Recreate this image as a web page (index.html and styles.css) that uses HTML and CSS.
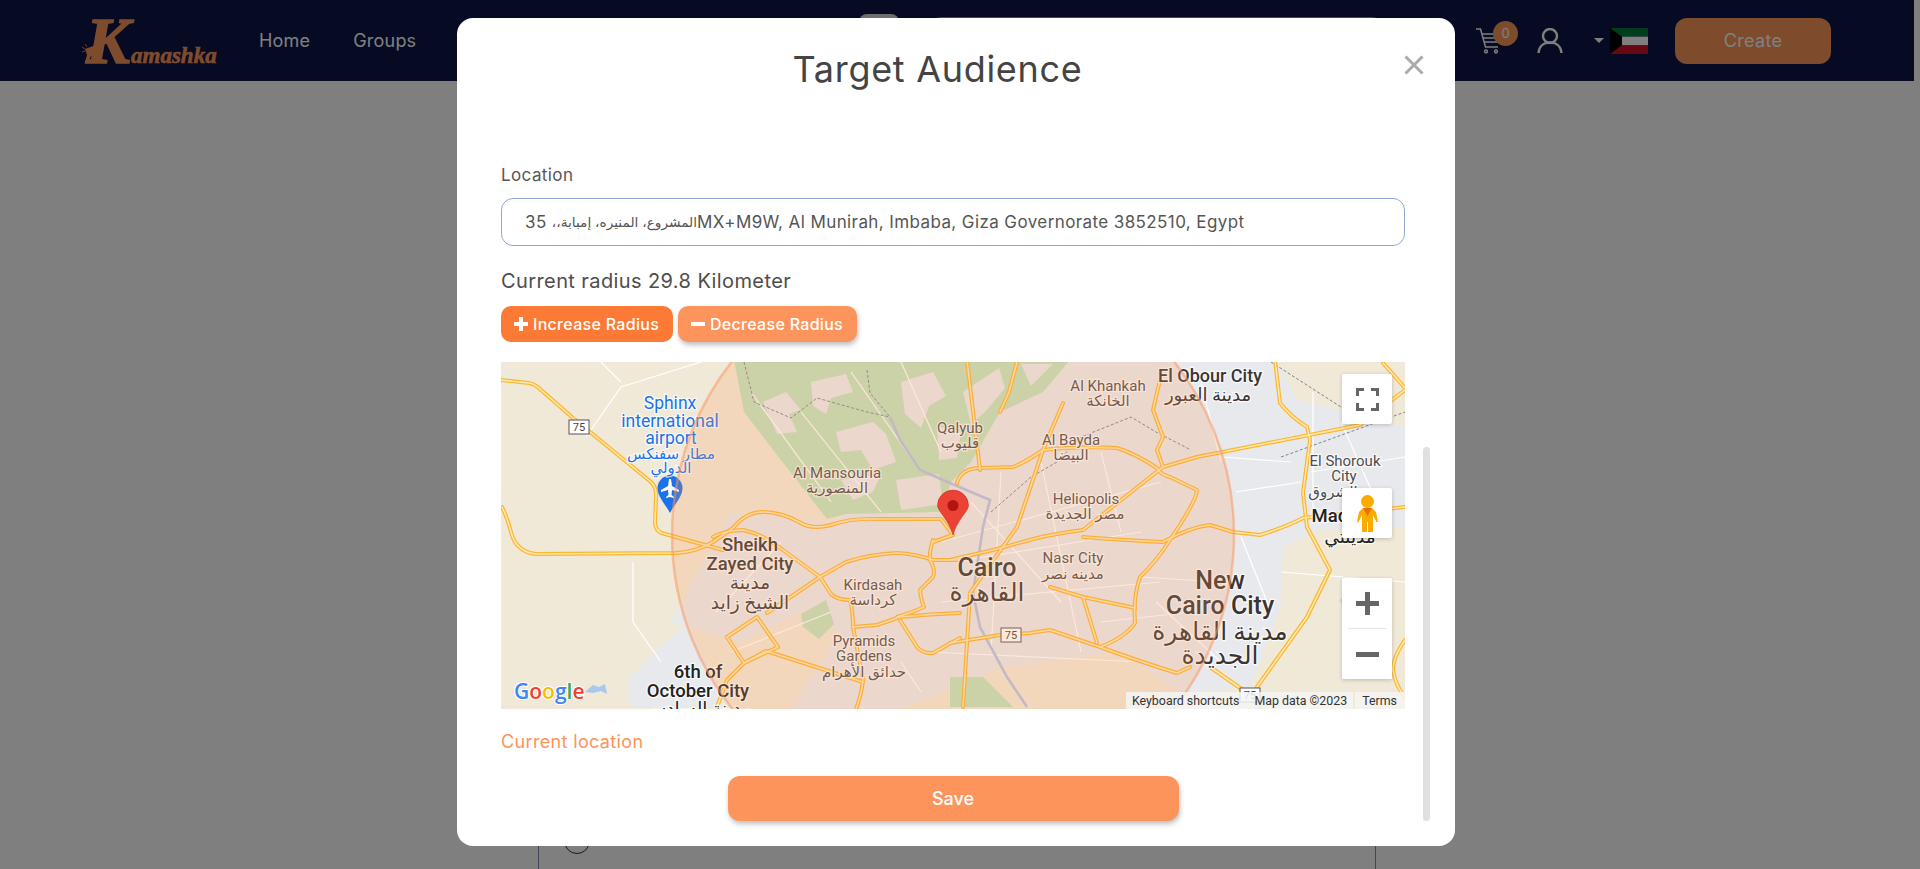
FILE: index.html
```html
<!DOCTYPE html>
<html lang="en">
  <head>
    <meta charset="UTF-8" />
    <meta name="viewport" content="width=device-width, initial-scale=1.0" />
    <title>Target Audience</title>
    <link rel="stylesheet" href="styles.css">
  </head>
  <body>
    <nav class="navbar">
      <a href="#" class="logo">
        <svg class="logo-horn" width="18" height="24" viewBox="0 0 18 24">
          <path d="M3 8 L14 4 L13 16 L9 15 L6 22 L3 21 L5 14 Z" />
          <path class="logo-horn-rays" d="M0 6 L3 8 M0 11 L3 10 M3 3 L5 6" />
        </svg>
        <span class="logo-k">K</span><span class="logo-rest">amashka</span>
      </a>
      <a href="#" class="nav-link nav-home">Home</a>
      <a href="#" class="nav-link nav-groups">Groups</a>
      <span class="nav-pill"></span>
      <span class="nav-search"></span>
      <div class="nav-right">
        <div class="cart">
          <svg width="26" height="27" viewBox="0 0 26 27" fill="none">
            <path d="M1 2 H5.5 L10.5 20 H23" />
            <path d="M7 7 H24 L22 15 H9" />
            <path d="M8 11 H23" />
            <circle cx="11" cy="24.5" r="1.4" />
            <circle cx="21" cy="24.5" r="1.4" />
          </svg>
          <span class="cart-badge">0</span>
        </div>
        <svg class="user-icon" width="26" height="26" viewBox="0 0 26 26" fill="none">
          <circle cx="13" cy="8" r="7" />
          <path d="M1.5 25 C2 18 7 14.5 13 14.5 C19 14.5 24 18 24.5 25" />
        </svg>
        <span class="caret"></span>
        <svg class="flag" width="38" height="26" viewBox="0 0 38 26">
          <rect width="38" height="8.67" fill="#007a3d" />
          <rect y="8.67" width="38" height="8.67" fill="#fff" />
          <rect y="17.33" width="38" height="8.67" fill="#ce1126" />
          <path d="M0 0 L12 8.67 V17.33 L0 26 Z" fill="#000" />
        </svg>
        <button class="btn-create">Create</button>
      </div>
    </nav>

    <main class="page-card">
      <span class="radio-dot"></span>
    </main>

    <!-- Target audience popup -->
    <div class="overlay">
      <div class="modal">
        <button class="modal-close" aria-label="Close">
          <svg width="20" height="20" viewBox="0 0 20 20">
            <path d="M1.5 1.5 L18.5 18.5 M18.5 1.5 L1.5 18.5" />
          </svg>
        </button>
        <span class="modal-scrollbar"></span>

        <h2 class="modal-title">Target Audience</h2>

        <div class="field-label">Location</div>
        <div class="field-input"><span>35 </span><span class="field-arabic" dir="rtl">المشروع، المنيره، إمبابة،،</span><span>MX+M9W, Al Munirah, Imbaba, Giza Governorate 3852510, Egypt</span></div>

        <p class="radius-text">Current radius 29.8 Kilometer</p>
        <div class="radius-buttons">
          <button class="btn-radius btn-increase">
            <svg width="14" height="14" viewBox="0 0 14 14"><path d="M5 0 H9 V5 H14 V9 H9 V14 H5 V9 H0 V5 H5 Z" /></svg>
            Increase Radius
          </button>
          <button class="btn-radius btn-decrease">
            <svg width="14" height="14" viewBox="0 0 14 14"><path d="M0 5 H14 V9 H0 Z" /></svg>
            Decrease Radius
          </button>
        </div>

        <div class="map">
          <svg class="map-canvas" width="904" height="347" viewBox="0 0 904 347">
            <defs>
              <g id="highways">
                <path d="M-1 18 L28 21 Q34 22 40 28 L72 56 L150 120 Q156 126 155 135 L154 160 Q154 170 164 172 L222 188" />
                <path d="M1 145 Q6 155 10 170 Q15 190 35 192 L175 191 Q195 190 212 180 L232 166 Q245 150 262 150 Q280 150 298 160 Q310 168 330 163 Q350 156 375 157 L439 157" />
                <path d="M212 175 Q225 168 242 168 Q262 172 282 188 L319 215 L330 232 Q336 238 349 238 Q352 250 352 265 L362 318 Q360 335 355 347" />
                <path d="M266 251 L319 215 L345 200 Q370 192 396 191 Q415 192 432 198 L459 198" />
                <path d="M226 275 L256 255 L277 285 L243 301 L226 318 Q220 335 215 347" />
                <path d="M226 275 L243 301 L265 289 L362 320" />
                <path d="M352 265 L376 263 L399 255 Q430 252 459 251" />
                <path d="M432 178 Q428 190 429 198 Q435 208 432 215 L419 228 Q420 238 423 245 Q412 250 396 255" />
                <path d="M399 258 L416 285 Q422 292 432 291 L459 276" />
                <path d="M456 121 Q460 106 480 106 L512 105 Q525 100 542 88 Q575 84 616 86 Q635 92 656 106 Q660 113 669 115 L696 128 Q696 138 669 178 Q655 200 639 215 Q632 235 634 261 Q625 275 599 285 L549 268 L529 271 L499 273 L449 281" />
                <path d="M599 285 Q640 300 676 311 L689 305" />
                <path d="M709 305 L742 328 L760 345" />
                <path d="M449 198 L492 188 L540 175 Q565 170 582 168 L662 105 L696 95 L859 63 L904 28" />
                <path d="M582 175 Q620 178 662 180 Q690 165 709 163 L732 170 L759 173 Q785 165 802 156 L904 145" />
                <path d="M634 246 L582 235 L549 225" />
                <path d="M582 235 L596 281" />
                <path d="M466 -2 L479 108" />
                <path d="M562 41 L542 88 L516 165 L469 231 L466 281 L462 345" />
                <path d="M659 18 L652 48 L662 75 L656 88 L662 105" />
                <path d="M774 -2 L779 41 Q790 55 806 65 L809 78 L802 131 L806 165 L829 208 L806 255 L756 325" />
                <path d="M882 1 L904 26" />
                <path d="M904 278 Q892 295 892 308 Q895 325 904 335" />
                <path d="M516 0 L508 30 L499 50" />
                <path d="M440 157 L452 173 L432 180" />
              </g>
            </defs>

            <rect class="map-land" width="904" height="347" />
            <path class="map-urban" d="M440 60 L560 0 L776 -2 L796 38 L904 65 L904 165 L816 168 L782 185 L779 248 L749 325 L682 332 L620 290 L500 305 L400 347 L290 347 L340 270 L300 250 L240 280 L170 260 L230 150 L330 160 Z" />
            <path class="map-urban" d="M129 315 L159 285 L186 261 L226 345 L129 345 Z" />
            <path class="map-green" d="M233 -2 L243 50 L276 93 L326 157 L345 152 L440 150 L450 120 L470 100 L499 50 L542 30 L569 -2 Z" />
            <path class="map-blotch" d="M262 40 L285 30 L300 48 L288 52 L296 70 L276 72 Z M310 20 L345 12 L352 30 L330 36 L325 52 L312 44 Z M335 70 L372 60 L385 72 L395 100 L372 108 L360 88 L340 90 Z M400 20 L432 10 L445 34 L428 44 L420 66 L404 52 Z M340 118 L380 112 L372 130 L352 138 Z M395 118 L438 112 L442 142 L400 148 Z M462 30 L498 6 L504 26 L484 50 L470 62 Z M520 2 L552 2 L530 24 Z M436 64 L460 70 L456 96 L438 98 Z" />
            <path class="map-green" d="M300 252 L325 238 L333 262 L318 277 L302 265 Z M449 315 L482 315 L512 345 L449 345 Z M838 238 L850 232 L860 244 L846 248 Z" />

            <g class="map-streets">
              <path d="M200 0 L120 25 L85 75 M132 200 L132 260 L160 300 M215 250 L280 180 M120 20 L100 0 M250 30 L330 140 M300 50 L380 150 M350 10 L420 110" />
              <path d="M440 180 L660 120 M452 200 L640 170 M470 140 L560 240 M440 240 L660 220 M500 110 L490 290 M540 100 L580 290 M600 90 L620 170 M430 290 L640 300 M400 300 L420 330" />
              <path d="M600 260 L690 250 M640 215 L720 220 M655 240 L720 300 M700 20 L720 100 M720 95 L790 100 M735 130 L800 120 M740 175 L770 250" />
              <path d="M812 30 L812 160 M840 60 L880 150 M810 110 L904 95 M780 210 L904 220 M230 290 L330 250 M400 0 L440 90" />
            </g>
            <path class="map-nile" d="M389 55 L399 78 L419 108 L449 121 L489 138 L482 165 L472 231 L479 265 L506 315 L526 345" />
            <path class="map-border" d="M243 0 L253 40 L290 56 L316 36 L366 50 L389 55 M366 8 L369 31 L389 55 M490 150 L530 115 L556 100 L580 75 L630 55 L655 70 L690 88 M770 0 L840 45 M780 95 L904 50" />
            <use href="#highways" class="road-casing" />
            <use href="#highways" class="road-core" />

            <g class="shield"><rect x="68" y="58" width="20" height="14" /><text x="78" y="69">75</text></g>
            <g class="shield"><rect x="500" y="266" width="20" height="14" /><text x="510" y="277">75</text></g>
            <g class="shield"><rect x="739" y="326" width="20" height="14" /><text x="749" y="337">75</text></g>

            <path class="air-pin" d="M169 151 C165 143 156.500 135 156.500 126 A12.500 12.500 0 0 1 181.500 126 C181.500 135 173 143 169 151 Z" />
            <path class="air-plane" d="M168 117 H170 L171 124 L178 128 V130 L171 128 L170.500 133 L173 135 V136 L169 135 L165 136 V135 L167.500 133 L167 128 L160 130 V128 L167 124 Z" />

            <g class="lbl lbl-blue">
              <text class="t-air" x="169" y="47">Sphinx</text>
              <text class="t-air" x="169" y="65">international</text>
              <text class="t-air" x="170" y="82">airport</text>
              <text class="t-s" x="170" y="97">مطار سفنكس</text>
              <text class="t-s" x="170" y="111">الدولي</text>
            </g>
            <g class="lbl">
              <text class="t-s" x="336" y="116">Al Mansouria</text>
              <text class="t-s" x="336" y="131">المنصورية</text>
              <text class="t-s" x="372" y="228">Kirdasah</text>
              <text class="t-s" x="372" y="243">كرداسة</text>
              <text class="t-s" x="363" y="284">Pyramids</text>
              <text class="t-s" x="363" y="299">Gardens</text>
              <text class="t-s" x="363" y="315">حدائق الأهرام</text>
              <text class="t-s" x="459" y="71">Qalyub</text>
              <text class="t-s" x="459" y="86">قليوب</text>
              <text class="t-s" x="607" y="29">Al Khankah</text>
              <text class="t-s" x="607" y="44">الخانكة</text>
              <text class="t-s" x="570" y="83">Al Bayda</text>
              <text class="t-s" x="570" y="98">البيضا</text>
              <text class="t-s" x="585" y="142">Heliopolis</text>
              <text class="t-s" x="584" y="157">مصر الجديدة</text>
              <text class="t-s" x="572" y="201">Nasr City</text>
              <text class="t-s" x="572" y="217">مدينه نصر</text>
              <text class="t-s" x="844" y="104">El Shorouk</text>
              <text class="t-s" x="843" y="119">City</text>
              <text class="t-s" x="832" y="135">الشروق</text>
            </g>
            <g class="lbl lbl-big">
              <text class="t-m" x="249" y="189">Sheikh</text>
              <text class="t-m" x="249" y="208">Zayed City</text>
              <text class="t-m" x="249" y="227">مدينة</text>
              <text class="t-m" x="249" y="247">الشيخ زايد</text>
              <text class="t-m t-black" x="197" y="316">6th of</text>
              <text class="t-m t-black" x="197" y="335">October City</text>
              <text class="t-m t-black" x="197" y="353">مدينة السادس</text>
              <text class="t-o" x="709" y="20">El Obour City</text>
              <text class="t-o" x="707" y="39">مدينة العبور</text>
              <text class="t-l" x="486" y="214">Cairo</text>
              <text class="t-l" x="486" y="239">القاهرة</text>
              <text class="t-l" x="719" y="227">New</text>
              <text class="t-l" x="719" y="252">Cairo City</text>
              <text class="t-l" x="719" y="278">مدينة القاهرة</text>
              <text class="t-l" x="719" y="302">الجديدة</text>
              <text class="t-m t-black" x="849" y="160">Madinaty</text>
              <text class="t-m t-black" x="849" y="181">مدينتي</text>
            </g>

            <path class="map-lake" d="M84 330 L92 323 L98 325 L104 322 L106 332 L100 329 L92 331 Z" />
            <text class="google-mark" x="13" y="337"><tspan class="g-blue">G</tspan><tspan class="g-red">o</tspan><tspan class="g-yellow">o</tspan><tspan class="g-blue">g</tspan><tspan class="g-green">l</tspan><tspan class="g-red">e</tspan></text>

            <circle class="radius-circle" cx="452" cy="173" r="281" />

            <path class="pin" d="M452 173 C448 158 436.500 149 436.500 143.500 A15.500 15.500 0 0 1 467.500 143.500 C467.500 149 456 158 452 173 Z" />
            <circle class="pin-dot" cx="452" cy="143.500" r="5.500" />
          </svg>

          <div class="map-controls">
            <button class="map-ctrl">
              <svg width="23" height="23" viewBox="0 0 23 23"><path d="M1.500 8 V1.500 H8 M15 1.500 H21.500 V8 M21.500 15 V21.500 H15 M8 21.500 H1.500 V15" /></svg>
            </button>
            <button class="map-ctrl map-ctrl-pegman">
              <svg width="21" height="37" viewBox="0 0 21 37">
                <circle class="peg-body" cx="10.500" cy="6.500" r="6.500" />
                <path class="peg-body" d="M6 13 H15 L19 17 L21 27 H19.500 L16 20 V37 H11 V27 H10 V37 H5 V20 L1.500 27 H0 L2 17 Z" />
                <path class="peg-collar" d="M6 13 H15 L10.500 21 Z" />
              </svg>
            </button>
            <div class="map-zoom">
              <button class="map-ctrl">
                <svg width="23" height="23" viewBox="0 0 23 23"><path class="ctrl-solid" d="M9 0 H14 V9 H23 V14 H14 V23 H9 V14 H0 V9 H9 Z" /></svg>
              </button>
              <span class="zoom-sep"></span>
              <button class="map-ctrl">
                <svg width="23" height="23" viewBox="0 0 23 23"><path class="ctrl-solid" d="M0 9 H23 V14 H0 Z" /></svg>
              </button>
            </div>
          </div>

          <div class="map-attrib">
            <span class="attrib-main"><span>Keyboard shortcuts</span><span>Map data ©2023</span></span>
            <span class="attrib-terms">Terms</span>
          </div>
        </div>

        <a href="#" class="current-location">Current location</a>
        <button class="btn-save">Save</button>
      </div>
    </div>
  </body>
</html>
```

FILE: styles.css
```css
* {
  box-sizing: border-box;
}

html,
body {
  height: 100%;
  overflow: hidden;
}

body {
  margin: 0;
  padding-right: 6px;
  background-color: #fff;
  font-family: Inter, "DejaVu Sans", sans-serif;
  color: #444;
}

button {
  font-family: inherit;
  border: none;
  cursor: pointer;
}

/* navbar */
.navbar {
  display: flex;
  align-items: center;
  height: 81px;
  padding: 0 83px 0 82px;
  background-color: #0c1646;
}

.logo {
  display: flex;
  align-items: baseline;
  width: 136px;
  color: #fc985a;
  text-decoration: none;
  font-family: "Liberation Serif", serif;
  font-style: italic;
  font-weight: bold;
}

.logo-horn {
  align-self: center;
  margin: 24px -14px 0 0;
  flex: none;
}

.logo-horn path {
  fill: #fc985a;
}

.logo-horn .logo-horn-rays {
  fill: none;
  stroke: #fc985a;
  stroke-width: 0.8;
}

.logo-k {
  font-size: 66px;
  line-height: 66px;
  -webkit-text-stroke: 1.5px #fc985a;
}

.logo-rest {
  margin-left: 1px;
  font-size: 23px;
  -webkit-text-stroke: 0.6px #fc985a;
}

.nav-link {
  color: #fff;
  text-decoration: none;
  font-size: 18px;
  letter-spacing: 0.2px;
}

.nav-home {
  margin-left: 41px;
}

.nav-groups {
  margin-left: 43px;
}

.nav-pill {
  width: 40px;
  height: 53px;
  margin-left: 443px;
  border-radius: 8px;
  background-color: #ddd;
}

.nav-search {
  width: 451px;
  height: 47px;
  margin-left: 32px;
  border: 1px solid #8c93aa;
  border-radius: 10px;
}

.nav-right {
  display: flex;
  align-items: center;
  margin-left: auto;
}

.cart {
  position: relative;
  width: 26px;
  height: 27px;
}

.cart svg {
  stroke: #fff;
  stroke-width: 1.5;
}

.cart-badge {
  position: absolute;
  top: -6px;
  left: 18px;
  width: 25px;
  height: 25px;
  border-radius: 50%;
  background-color: #fc985a;
  color: #fff;
  font-size: 13px;
  line-height: 25px;
  text-align: center;
}

.user-icon {
  margin-left: 36px;
  stroke: #fff;
  stroke-width: 2.4;
}

.caret {
  width: 0;
  height: 0;
  margin-left: 31px;
  border-top: 5px solid #fff;
  border-left: 5px solid transparent;
  border-right: 5px solid transparent;
}

.flag {
  margin-left: 6px;
}

.btn-create {
  width: 156px;
  height: 46px;
  margin-left: 27px;
  border-radius: 12px;
  background-color: #fc985a;
  color: #fff;
  font-size: 18px;
  letter-spacing: 0.3px;
}

/* page behind the popup */
.page-card {
  width: 838px;
  height: 820px;
  margin: 0 auto;
  padding: 746px 0 0 25px;
  border: 1px solid #7d8db0;
}

.radio-dot {
  display: block;
  width: 26px;
  height: 26px;
  border: 1px solid #333;
  border-radius: 50%;
}

/* popup */
.overlay {
  position: fixed;
  inset: 0;
  padding: 18px 0 0 457px;
  background-color: rgba(0, 0, 0, 0.5);
}

.modal {
  position: relative;
  display: flex;
  flex-direction: column;
  align-items: flex-start;
  width: 998px;
  height: 828px;
  padding: 28px 50px 0 44px;
  background-color: #fff;
  border-radius: 16px;
}

.modal-close {
  position: absolute;
  top: 37px;
  right: 31px;
  padding: 0;
  background: none;
  line-height: 0;
}

.modal-close path {
  fill: none;
  stroke: #aaa;
  stroke-width: 3;
}

.modal-scrollbar {
  position: absolute;
  top: 429px;
  right: 25px;
  width: 7px;
  height: 374px;
  border-radius: 4px;
  background-color: #e0e0e0;
}

.modal-title {
  align-self: stretch;
  margin: 0;
  padding-right: 31px;
  font-size: 36px;
  font-weight: 400;
  letter-spacing: 0.7px;
  line-height: 46px;
  text-align: center;
  color: #444;
}

.field-label {
  margin-top: 72px;
  font-size: 17px;
  letter-spacing: 0.4px;
  line-height: 22px;
  color: #555;
}

.field-input {
  display: flex;
  align-items: center;
  width: 100%;
  height: 48px;
  margin-top: 12px;
  padding: 0 23px;
  border: 1px solid #8fa8cc;
  border-radius: 12px;
  font-size: 17px;
  letter-spacing: 0.4px;
  white-space: pre;
  color: #555;
}

.field-arabic {
  font-size: 13.700px;
  letter-spacing: 0;
}

.radius-text {
  margin: 22px 0 0;
  font-size: 20px;
  letter-spacing: 0.4px;
  line-height: 26px;
  color: #4d4d4d;
}

.radius-buttons {
  display: flex;
  gap: 5px;
  margin-top: 12px;
}

.btn-radius {
  display: flex;
  align-items: center;
  gap: 5px;
  height: 36px;
  padding: 0 13px;
  border-radius: 10px;
  color: #fff;
  font-size: 16px;
  font-weight: 500;
  letter-spacing: 0.3px;
  white-space: nowrap;
}

.btn-radius path {
  fill: #fff;
}

.btn-increase {
  width: 172px;
  background-color: #fc7a35;
}

.btn-decrease {
  width: 179px;
  background-color: #fc945c;
  box-shadow: 1px 3px 5px rgba(0, 0, 0, 0.25);
}

/* map */
.map {
  position: relative;
  flex: none;
  width: 904px;
  height: 347px;
  margin-top: 20px;
  overflow: hidden;
}

.map-canvas {
  display: block;
}

.map-land {
  fill: #f0e9d8;
}

.map-urban {
  fill: #e8e9ed;
}

.map-green {
  fill: #bfe3bd;
}

.map-blotch {
  fill: #e8e9ed;
}

.map-lake {
  fill: #a9c8ec;
}

.map-streets path {
  fill: none;
  stroke: #fff;
  stroke-width: 1.200;
}

.map-nile {
  fill: none;
  stroke: #b3c2e4;
  stroke-width: 2.600;
}

.map-border {
  fill: none;
  stroke: #7d8496;
  stroke-width: 1;
  stroke-dasharray: 3 2;
}

.road-casing,
.road-core {
  fill: none;
  stroke-linejoin: round;
  stroke-linecap: round;
}

.road-casing {
  stroke: #fdb62f;
  stroke-width: 4;
}

.road-core {
  stroke: #fde9b0;
  stroke-width: 1.600;
}

.shield rect {
  fill: #fff;
  stroke: #555;
  stroke-width: 1;
}

.shield text {
  font-family: Roboto, sans-serif;
  font-size: 11px;
  text-anchor: middle;
  fill: #444;
}

.air-pin {
  fill: #1a73e8;
}

.air-plane {
  fill: #fff;
}

.lbl text {
  font-family: Roboto, "DejaVu Sans", sans-serif;
  text-anchor: middle;
  fill: #4d4d4d;
  stroke: rgba(255, 255, 255, 0.75);
  stroke-width: 2.500px;
  paint-order: stroke;
}

.lbl-blue text {
  fill: #1a73e8;
}

.lbl-big text {
  fill: #3a3532;
  font-weight: 500;
}

.lbl .t-black {
  fill: #222;
}

.lbl .t-s {
  font-size: 15px;
}

.lbl .t-air {
  font-size: 17.500px;
}

.lbl .t-o {
  font-size: 18px;
}

.lbl .t-m {
  font-size: 18.500px;
}

.lbl .t-l {
  font-size: 25px;
}

.google-mark {
  font-family: "Open Sans", sans-serif;
  font-size: 21px;
  font-weight: 600;
  stroke: #fff;
  stroke-width: 2px;
  paint-order: stroke;
}

.g-blue {
  fill: #4285f4;
}

.g-red {
  fill: #ea4335;
}

.g-yellow {
  fill: #fbbc05;
}

.g-green {
  fill: #34a853;
}

.radius-circle {
  fill: rgba(252, 148, 92, 0.22);
  stroke: rgba(252, 148, 92, 0.5);
  stroke-width: 2.500;
}

.pin {
  fill: #ea4335;
  stroke: #c5221f;
  stroke-width: 0.500;
}

.pin-dot {
  fill: #b31412;
}

.map-controls {
  position: absolute;
  top: 12px;
  right: 13px;
  display: flex;
  flex-direction: column;
  gap: 64px;
}

.map-ctrl {
  display: flex;
  align-items: center;
  justify-content: center;
  width: 50px;
  height: 50px;
  padding: 0;
  background-color: #fff;
  border-radius: 2px;
  box-shadow: 0 1px 4px rgba(0, 0, 0, 0.2);
}

.map-ctrl path {
  fill: none;
  stroke: #666;
  stroke-width: 3;
}

.map-ctrl .ctrl-solid {
  fill: #666;
  stroke: none;
}

.map-ctrl .peg-body {
  fill: #f9ab00;
  stroke: none;
}

.map-ctrl .peg-collar {
  fill: #e8710a;
  stroke: none;
}

.map-ctrl-pegman {
  margin-bottom: -24px;
}

.map-zoom {
  display: flex;
  flex-direction: column;
  align-items: center;
  background-color: #fff;
  border-radius: 2px;
  box-shadow: 0 1px 4px rgba(0, 0, 0, 0.2);
}

.map-zoom .map-ctrl {
  box-shadow: none;
}

.zoom-sep {
  width: 38px;
  height: 1px;
  background-color: #e6e6e6;
}

.map-attrib {
  position: absolute;
  right: 0;
  bottom: 0;
  display: flex;
  gap: 2px;
  height: 17px;
  font-family: Roboto, sans-serif;
  font-size: 12.400px;
  line-height: 17px;
  color: #333;
}

.attrib-main,
.attrib-terms {
  background-color: rgba(245, 245, 245, 0.85);
}

.attrib-main {
  display: flex;
  gap: 15px;
  padding: 0 6px;
}

.attrib-terms {
  padding: 0 8px 0 7px;
}

.current-location {
  margin-top: 22px;
  color: #fc945c;
  font-size: 18px;
  letter-spacing: 0.35px;
  line-height: 22px;
  text-decoration: none;
}

.btn-save {
  align-self: center;
  width: 451px;
  height: 45px;
  margin-top: 23px;
  border-radius: 12px;
  background-color: #fc945c;
  color: #fff;
  font-size: 18px;
  font-weight: 500;
  box-shadow: 1px 3px 5px rgba(0, 0, 0, 0.25);
}
```
